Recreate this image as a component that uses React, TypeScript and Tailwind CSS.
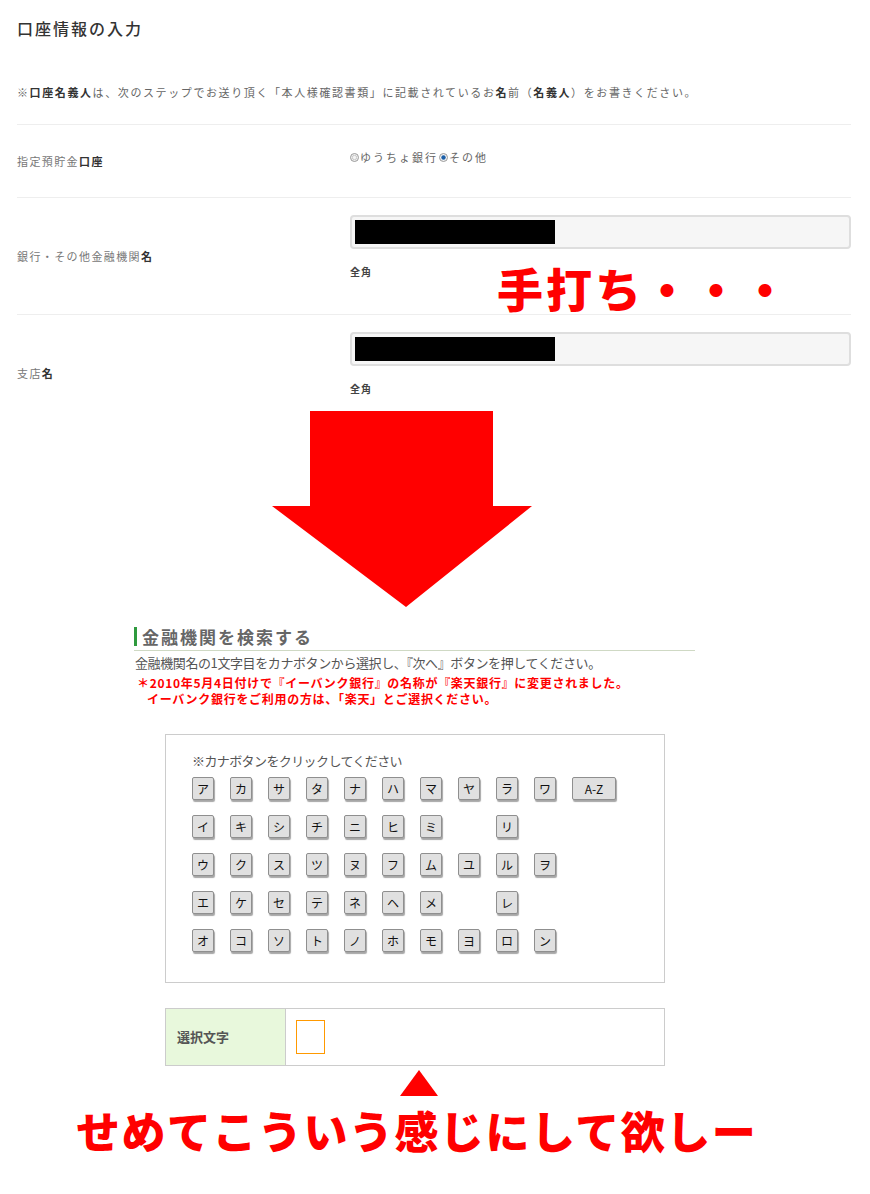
import React from 'react';

const jp = { fontFamily: '"Noto Sans CJK JP", "Noto Sans", sans-serif' };

const kanaRows: string[][] = [
  ['ア', 'カ', 'サ', 'タ', 'ナ', 'ハ', 'マ', 'ヤ', 'ラ', 'ワ', 'A-Z'],
  ['イ', 'キ', 'シ', 'チ', 'ニ', 'ヒ', 'ミ', '', 'リ'],
  ['ウ', 'ク', 'ス', 'ツ', 'ヌ', 'フ', 'ム', 'ユ', 'ル', 'ヲ'],
  ['エ', 'ケ', 'セ', 'テ', 'ネ', 'ヘ', 'メ', '', 'レ'],
  ['オ', 'コ', 'ソ', 'ト', 'ノ', 'ホ', 'モ', 'ヨ', 'ロ', 'ン'],
];

const Radio = ({ checked }: { checked?: boolean }) => (
  <svg width="9" height="9" viewBox="0 0 9 9" className="shrink-0">
    <circle cx="4.5" cy="4.5" r="4" fill="#f4f4f4" stroke="#999" strokeWidth="1" />
    {checked ? (
      <circle cx="4.5" cy="4.5" r="2.2" fill="#1b5fa8" />
    ) : (
      <circle cx="4.5" cy="4.5" r="2.2" fill="none" stroke="#bbb" strokeWidth="0.8" />
    )}
  </svg>
);

const MaskedInput = () => (
  <div className="h-[34px] w-full rounded-[4px] border-2 border-[#dedede] bg-[#f6f6f6] p-[3px]">
    <div className="h-full w-[200px] bg-black" />
  </div>
);

const KanaButton = ({ label }: { label: string }) => {
  if (!label) return <div className="w-[22px]" />;
  const wide = label === 'A-Z';
  return (
    <button
      className={`flex h-[23px] items-center justify-center rounded-[2px] border border-[#8f8f8f] bg-[#e0e0e0] text-[12px] leading-none text-[#111] shadow-[1px_2px_1px_rgba(0,0,0,0.35)] ${
        wide ? 'w-[44px]' : 'w-[22px]'
      }`}
    >
      {label}
    </button>
  );
};

export default function App() {
  return (
    <div className="relative w-[870px] bg-white" style={jp}>
      {/* 口座情報 */}
      <section className="relative h-[411px] overflow-hidden pl-[17px] pr-[19px]">
        <h1 className="pt-[18px] text-[16px] leading-[20px] font-medium tracking-[2px] text-[#333]">
          口座情報の入力
        </h1>
        <p className="mt-[46px] text-[11px] leading-[16px] tracking-[1.6px] text-[#666]">
          ※<b className="font-bold text-[#333]">口座名義人</b>は、次のステップでお送り頂く「本人様確認書類」に記載されているお
          <b className="font-bold text-[#333]">名</b>前（<b className="font-bold text-[#333]">名義人</b>）をお書きください。
        </p>
        <div className="mt-[24px] border-t border-[#eee]" />

        <div className="flex h-[73px] items-center border-b border-[#eee]">
          <div className="w-[333px] text-[11px] tracking-[1.4px] text-[#777]">
            指定預貯金<b className="font-bold text-[#333]">口座</b>
          </div>
          <div className="-mt-[8px] flex items-center text-[11px] tracking-[2px] text-[#666]">
            <Radio />
            <span className="ml-[1px]">ゆうちょ銀行</span>
            <span className="ml-[1px]" />
            <Radio checked />
            <span className="ml-[1px]">その他</span>
          </div>
        </div>

        <div className="flex items-center border-b border-[#eee]">
          <div className="w-[333px] text-[11px] tracking-[1.4px] text-[#777]">
            銀行・その他金融機関<b className="font-bold text-[#333]">名</b>
          </div>
          <div className="flex-1 pt-[17px] pb-[36px]">
            <MaskedInput />
            <div className="mt-[17px] text-[10px] leading-[12px] font-bold tracking-[1px] text-[#444]">全角</div>
          </div>
        </div>

        <div className="flex items-center">
          <div className="w-[333px] text-[11px] tracking-[1.4px] text-[#777]">
            支店<b className="font-bold text-[#333]">名</b>
          </div>
          <div className="flex-1 pt-[17px] pb-[36px]">
            <MaskedInput />
            <div className="mt-[17px] text-[10px] leading-[12px] font-bold tracking-[1px] text-[#444]">全角</div>
          </div>
        </div>

        <div className="absolute top-[261px] left-[497px] text-[46px] leading-[52px] font-black tracking-[3px] text-[#ff0000]">
          手打ち・・・
        </div>
      </section>

      {/* arrow */}
      <div className="ml-[272px] h-[196px] w-[261px]">
        <svg width="261" height="196" viewBox="0 0 261 196">
          <polygon points="38,0 221,0 221,95 260,95 134,196 0,95 38,95" fill="#ff0000" />
        </svg>
      </div>

      {/* 金融機関検索 */}
      <section className="mt-[20px] ml-[134px] w-[561px]">
        <div className="border-b border-[#cfd9c4] pb-[4px]">
          <h2 className="flex h-[19px] items-center border-l-[3px] border-[#2f9a3e] pl-[5px] text-[17px] leading-none font-bold tracking-[2px] text-[#666]">
            金融機関を検索する
          </h2>
        </div>
        <p className="mt-[4px] pl-[1px] text-[13px] leading-[16px] tracking-[-0.4px] text-[#555]">
          金融機関名の1文字目をカナボタンから選択し、『次へ』ボタンを押してください。
        </p>
        <p className="mt-[4px] pl-[3px] text-[12px] leading-[16px] font-bold tracking-[0.7px] text-[#ff0000]">
          ＊2010年5月4日付けで『イーバンク銀行』の名称が『楽天銀行』に変更されました。
          <br />
          <span className="pl-[10px]">イーバンク銀行をご利用の方は、「楽天」とご選択ください。</span>
        </p>
      </section>

      <div className="mt-[27px] ml-[165px] w-[500px] border border-[#ccc] pt-[18px] pb-[30px] pl-[26px]">
        <p className="text-[13px] leading-[16px] tracking-[-0.6px] text-[#555]">※カナボタンをクリックしてください</p>
        <div className="mt-[8px] flex flex-col gap-y-[15px]">
          {kanaRows.map((row, i) => (
            <div key={i} className="flex gap-x-[16px]">
              {row.map((k, j) => (
                <KanaButton key={j} label={k} />
              ))}
            </div>
          ))}
        </div>
      </div>

      <div className="mt-[25px] ml-[165px] flex h-[58px] w-[500px] border border-[#ccc]">
        <div className="flex w-[120px] items-center border-r border-[#ccc] bg-[#e8f8dc] pl-[11px] text-[13px] font-bold text-[#555]">
          選択文字
        </div>
        <div className="pt-[11px] pl-[10px]">
          <div className="h-[34px] w-[29px] border border-[#ff9900] bg-white" />
        </div>
      </div>

      <div className="mt-[4px] ml-[400px] h-[26px] w-[38px]">
        <svg width="38" height="26" viewBox="0 0 38 26">
          <polygon points="19,0 38,26 0,26" fill="#ff0000" />
        </svg>
      </div>

      <div className="mt-[8px] pb-[38px] pl-[76px] text-[44px] leading-[52px] font-black tracking-[1.5px] text-[#ff0000]">
        せめてこういう感じにして欲しー
      </div>
    </div>
  );
}
